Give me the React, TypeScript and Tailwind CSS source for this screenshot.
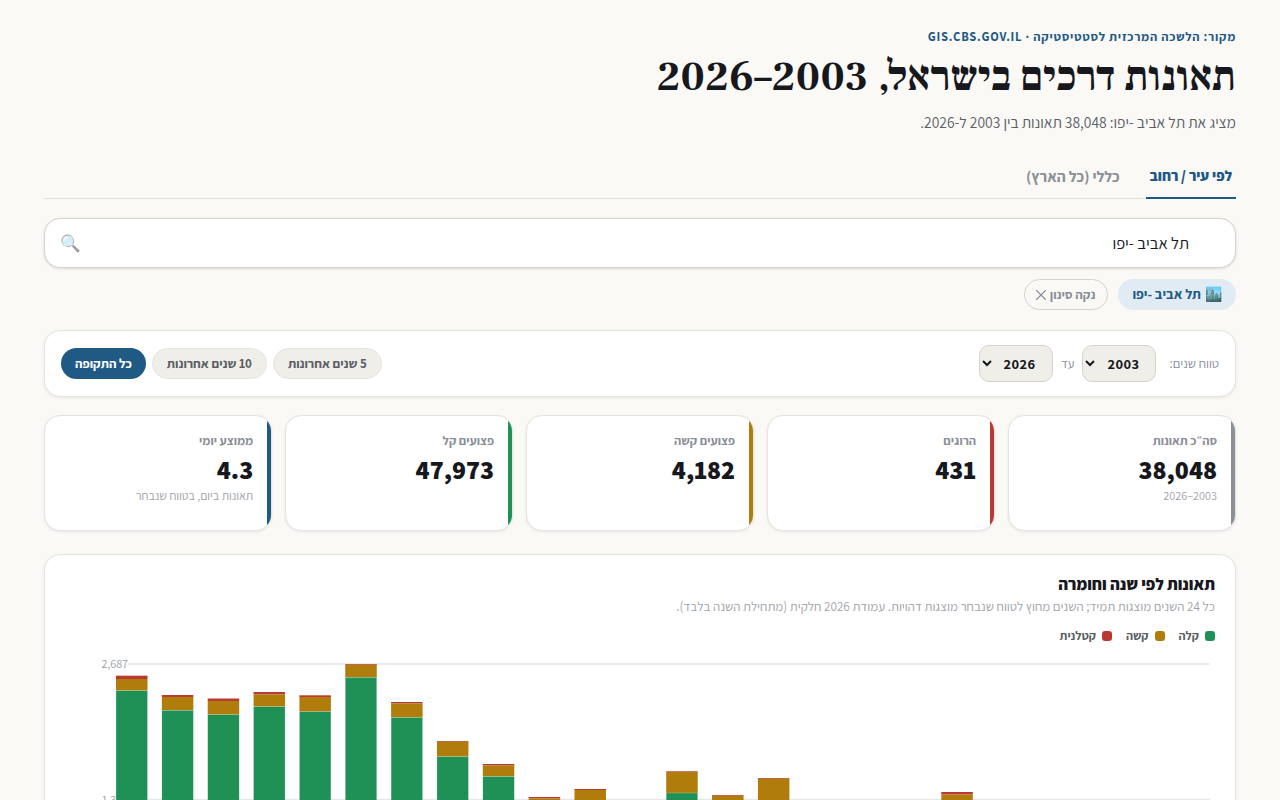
import { X } from 'lucide-react';

const bars: [number, number, number][] = [
  [675.7, 679, 690.7], [695, 697, 710.3], [698.5, 701, 714.7], [692, 694.3, 706.7], [695.3, 697, 711.7], [664, 664.8, 677.3],
  [702, 703.5, 717.5], [741, 741.8, 756.7], [764, 765.5, 776.5], [797, 798.5, 813], [789, 790, 808], [804, 805, 822],
  [771.3, 772, 793], [795, 795.8, 812], [778, 778.8, 800.5], [808, 809, 826], [812, 813, 829], [806, 807, 824],
  [792, 794.5, 815], [815, 816, 831], [822, 823, 838], [830, 831, 846], [828, 829, 844], [920, 921, 928],
];

const stats = [
  { label: 'סה״כ תאונות', value: '38,048', sub: '2003–2026', bar: 'bg-[#8a8f98]' },
  { label: 'הרוגים', value: '431', sub: '', bar: 'bg-[#b83a32]' },
  { label: 'פצועים קשה', value: '4,182', sub: '', bar: 'bg-[#b07c0c]' },
  { label: 'פצועים קל', value: '47,973', sub: '', bar: 'bg-[#1f9156]' },
  { label: 'ממוצע יומי', value: '4.3', sub: 'תאונות ביום, בטווח שנבחר', bar: 'bg-[#1f5a85]' },
];

function Chart() {
  return (
    <svg width="1150" height="300" viewBox="0 0 1150 300" className="block overflow-visible">
      <line x1="63" x2="1145" y1="1" y2="1" stroke="#e5e7eb" strokeWidth="1.5" />
      <line x1="63" x2="1145" y1="136.5" y2="136.5" stroke="#e5e7eb" strokeWidth="1.5" />
      <line x1="63" x2="1145" y1="271" y2="271" stroke="#e5e7eb" strokeWidth="1.5" />
      <text x="63" y="5" textAnchor="end" fontSize="12" fill="#9a9da3">2,687</text>
      <text x="63" y="140.5" textAnchor="end" fontSize="12" fill="#9a9da3">1,343</text>
      <text x="63" y="275" textAnchor="end" fontSize="12" fill="#9a9da3">0</text>
      {bars.map(([r, y, g], i) => {
        const x = 51 + i * 45.85;
        const o = 663;
        return (
          <g key={i}>
            <rect x={x} y={r - o} width="31.5" height={y - r} fill="#b83a32" />
            <rect x={x} y={y - o} width="31.5" height={g - y} fill="#b07c0c" />
            <rect x={x} y={g - o} width="31.5" height={934 - g} fill="#1f9156" stroke="#ffffff" strokeOpacity="0.45" strokeWidth="0.5" />
          </g>
        );
      })}
    </svg>
  );
}

export default function App() {
  return (
    <div dir="rtl" className="min-h-screen bg-[#faf9f6] px-[44px] pt-[28px] pb-10 text-[#16181d] font-['Assistant','Noto_Sans_CJK_JP',sans-serif]">
      <div className="text-[12.6px] leading-[17px] font-bold tracking-[0.06em] text-[#1f5a85]">מקור: הלשכה המרכזית לסטטיסטיקה · GIS.CBS.GOV.IL</div>
      <h1 className="mt-[7px] text-[41.9px] leading-[50px] font-bold font-['Frank_Ruhl_Libre',serif]">תאונות דרכים בישראל, 2003–2026</h1>
      <p className="mt-[9px] text-[15.5px] leading-[22px] text-[#5b5f66]">מציג את תל אביב -יפו: 38,048 תאונות בין 2003 ל-2026.</p>

      <div className="mt-[24px] flex gap-[2px] border-b border-[#e2e0da]">
        <div className="-mb-px border-b-2 border-[#1f5a85] px-1 pt-[8px] pb-[10px] text-[14.7px] leading-[22px] font-extrabold text-[#1f5a85]">לפי עיר / רחוב</div>
        <div className="px-[24px] pt-[8px] pb-[10px] text-[15.6px] leading-[22px] font-bold text-[#8a8f98]">כללי (כל הארץ)</div>
      </div>

      <div className="mt-[19px] flex h-[50px] items-center justify-between rounded-[16px] border border-[#d6d3cc] bg-white pr-[46px] pl-[15px] shadow-[0_1px_3px_rgba(0,0,0,0.12)]">
        <span className="text-[16.6px]">תל אביב -יפו</span>
        <span className="text-[16.6px] opacity-60">🔍</span>
      </div>

      <div className="mt-[11px] flex items-center gap-[10px]">
        <div className="flex h-[31px] items-center gap-[4px] rounded-full bg-[#e1ebf3] px-[14px] text-[14px] font-bold text-[#1f5a85]"><span>🏙️</span> תל אביב -יפו</div>
        <div className="flex h-[31px] items-center rounded-full border border-[#d6d3cc] pr-[12px] pl-[7px] text-[13px] font-bold text-[#8a8f98]">נקה סינון <X size={18} strokeWidth={1.5} /></div>
      </div>

      <div className="mt-[20px] flex h-[67px] items-center justify-between rounded-[16px] border border-[#e6e4de] bg-white px-[16px] shadow-[0_1px_3px_rgba(0,0,0,0.08)]">
        <div className="flex items-center gap-[8px]">
          <span className="ml-[5px] text-[13px] text-[#8a8f98]">טווח שנים:</span>
          <select defaultValue="2003" className="h-[37px] w-[74px] rounded-[10px] border border-[#d6d3cc] bg-[#f0eee8] pr-[12px] pl-1 text-[14.5px] font-bold tracking-[0.03em]"><option>2003</option></select>
          <span className="text-[13px] text-[#8a8f98]">עד</span>
          <select defaultValue="2026" className="h-[37px] w-[74px] rounded-[10px] border border-[#d6d3cc] bg-[#f0eee8] pr-[12px] pl-1 text-[14.5px] font-bold tracking-[0.03em]"><option>2026</option></select>
        </div>
        <div className="flex items-center gap-[6px]">
          <div className="flex h-[31px] items-center rounded-full border border-[#e6e4de] bg-[#f0eee8] px-[14px] text-[13px] font-bold text-[#5b5f66]">5 שנים אחרונות</div>
          <div className="flex h-[31px] items-center rounded-full border border-[#e6e4de] bg-[#f0eee8] px-[14px] text-[13px] font-bold text-[#5b5f66]">10 שנים אחרונות</div>
          <div className="flex h-[31px] items-center rounded-full bg-[#1f5a85] px-[14px] text-[13px] font-bold text-white">כל התקופה</div>
        </div>
      </div>

      <div className="mt-[18px] grid grid-cols-5 gap-[12.8px]">
        {stats.map((s) => (
          <div key={s.label} className="relative h-[116px] overflow-hidden rounded-[16px] border border-[#e6e4de] bg-white pt-[16px] pr-[18px] pl-[16px] shadow-[0_1px_3px_rgba(0,0,0,0.08)]">
            <span className={`absolute inset-y-0 right-0 w-[4px] ${s.bar}`} />
            <div className="text-[12.6px] leading-[18px] font-bold text-[#8a8f98]">{s.label}</div>
            <div className="mt-[3px] text-[26px] leading-[32px] font-black">{s.value}</div>
            {s.sub && <div className="mt-[2px] text-[12.2px] leading-[18px] text-[#a0a3a9]">{s.sub}</div>}
          </div>
        ))}
      </div>

      <div className="mt-[23px] rounded-[16px] border border-[#e6e4de] bg-white px-[20px] pt-[17px] pb-4 shadow-[0_1px_3px_rgba(0,0,0,0.08)]">
        <div className="text-[16.6px] leading-[24px] font-extrabold">תאונות לפי שנה וחומרה</div>
        <div className="mt-[2px] text-[13.1px] leading-[18px] text-[#a0a3a9]">כל 24 השנים מוצגות תמיד; השנים מחוץ לטווח שנבחר מוצגות דהויות. עמודת 2026 חלקית (מתחילת השנה בלבד).</div>
        <div className="mt-[11px] flex items-center gap-[14px] text-[12.3px] leading-[18px] font-bold text-[#5b5f66]">
          <span className="flex items-center gap-[6px]"><i className="h-[10px] w-[10px] rounded-[3px] bg-[#1f9156]" />קלה</span>
          <span className="flex items-center gap-[6px]"><i className="h-[10px] w-[10px] rounded-[3px] bg-[#b07c0c]" />קשה</span>
          <span className="flex items-center gap-[6px]"><i className="h-[10px] w-[10px] rounded-[3px] bg-[#b83a32]" />קטלנית</span>
        </div>
        <div dir="ltr" className="mt-[18px]"><Chart /></div>
      </div>
    </div>
  );
}
